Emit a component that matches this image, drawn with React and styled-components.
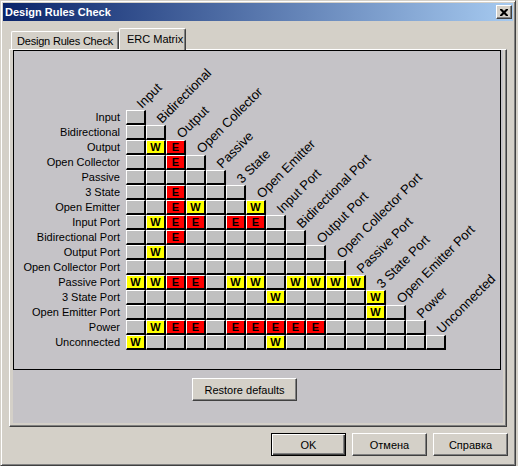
import React from 'react';
import styled, { createGlobalStyle, css } from 'styled-components';

const Global = createGlobalStyle`
  html, body { margin: 0; padding: 0; background: #d4d0c8; }
  body {
    width: 518px; height: 466px; overflow: hidden;
    font-family: "Liberation Sans", Arial, sans-serif;
    font-size: 11px; color: #000;
  }
`;

const Window = styled.div`
  box-sizing: border-box;
  width: 516px;
  height: 466px;
  background: #d4d0c8;
  border: 1px solid;
  border-color: #d4d0c8 #404040 #404040 #d4d0c8;
  box-shadow: inset 1px 1px #fff, inset -1px -1px #808080;
  padding: 2px;
  display: flex;
  flex-direction: column;
`;

const TitleBar = styled.div`
  height: 18px;
  flex: none;
  display: flex;
  align-items: center;
  padding-left: 2px;
  background: linear-gradient(to right, #0a246a, #a6caf0);
  color: #fff;
  font-weight: bold;
  font-size: 11px;
`;

const TitleText = styled.span`
  line-height: 18px;
`;

const CloseButton = styled.div`
  box-sizing: border-box;
  margin-left: auto;
  margin-right: 1px;
  width: 16px;
  height: 14px;
  background: #d4d0c8;
  border: 1px solid;
  border-color: #fff #404040 #404040 #fff;
  box-shadow: inset -1px -1px #808080;
  display: flex;
  align-items: center;
  justify-content: center;
`;

const Body = styled.div`
  flex: 1;
  display: flex;
  flex-direction: column;
  padding: 7px 6px 0 6px;
`;

const TabRow = styled.div`
  display: flex;
  align-items: flex-end;
  height: 21px;
  padding-left: 2px;
  position: relative;
  z-index: 2;
`;

const Tab = styled.div`
  box-sizing: border-box;
  background: #d4d0c8;
  border-top: 1px solid #fff;
  border-left: 1px solid #fff;
  border-right: 1px solid #404040;
  border-radius: 2px 2px 0 0;
  box-shadow: inset -1px 0 #808080;
  white-space: nowrap;
  line-height: 13px;
  ${p => p.$active ? css`
    width: 67px;
    height: 22px;
    margin-bottom: -1px;
    padding: 4px 0 0 7px;
  ` : css`
    width: 108px;
    height: 18px;
    padding: 3px 0 0 5px;
    letter-spacing: -0.2px;
  `}
`;

const Panel = styled.div`
  box-sizing: border-box;
  width: 498px;
  height: 378px;
  border-top: 1px solid #fff;
  border-left: 1px solid #fff;
  border-right: 1px solid #404040;
  border-bottom: 1px solid #404040;
  box-shadow: inset -1px -1px #808080;
  padding: 0 3px 3px 3px;
  position: relative;
  z-index: 1;
`;

const Page = styled.div`
  width: 490px;
  height: 373px;
  background: #c5c3c7;
  display: flex;
  flex-direction: column;
`;

const MatrixBox = styled.div`
  box-sizing: border-box;
  width: 488px;
  height: 320px;
  border: 1px solid #000;
  padding-top: 59px;
  display: flex;
  flex-direction: column;
`;

const Row = styled.div`
  display: flex;
  height: 15px;
`;

const RowLabel = styled.div`
  width: 106px;
  margin-right: 6px;
  text-align: right;
  line-height: 15px;
  white-space: nowrap;
`;

const cellColors = { '.': '#c0c0c0', W: '#ffff00', E: '#ff0000' };

const Cell = styled.div`
  box-sizing: border-box;
  width: 20px;
  height: 15px;
  position: relative;
  border-top: 1px solid #fff;
  border-left: 1px solid #fff;
  border-right: 2px solid #000;
  border-bottom: 2px solid #000;
  background: ${p => cellColors[p.$kind]};
  display: flex;
  align-items: center;
  justify-content: center;
  font-weight: bold;
  font-size: 11px;
  line-height: 12px;
`;

const ColLabel = styled.span`
  position: absolute;
  left: 15px;
  top: -13px;
  font-size: 13px;
  line-height: 13px;
  font-weight: normal;
  white-space: nowrap;
  transform-origin: 0 11px;
  transform: rotate(-45deg);
`;

const Button = styled.button`
  box-sizing: border-box;
  width: ${p => p.$w || 75}px;
  height: 23px;
  padding: 0;
  font-family: "Liberation Sans", Arial, sans-serif;
  font-size: 11px;
  color: #000;
  background: #d4d0c8;
  border: 1px solid;
  border-color: #fff #404040 #404040 #fff;
  box-shadow: inset -1px -1px #808080;
  ${p => p.$default && css`
    border-color: #000;
    box-shadow: inset 1px 1px #fff, inset -1px -1px #404040, inset -2px -2px #808080;
  `}
`;

const RestoreButton = styled(Button)`
  margin-top: 8px;
  margin-left: 179px;
`;

const Footer = styled.div`
  display: flex;
  justify-content: flex-end;
  gap: 6px;
  margin-top: 6px;
  margin-right: -1px;
`;

const names = [
  'Input', 'Bidirectional', 'Output', 'Open Collector', 'Passive', '3 State',
  'Open Emitter', 'Input Port', 'Bidirectional Port', 'Output Port',
  'Open Collector Port', 'Passive Port', '3 State Port', 'Open Emitter Port',
  'Power', 'Unconnected',
];

const matrix = [
  '.',
  '..',
  '.WE',
  '..E.',
  '.....',
  '..E...',
  '..EW..W',
  '.WEE.EE.',
  '..E......',
  '.W........',
  '...........',
  'WWEE.WW.WWWW',
  '.......W....W',
  '............W.',
  '.WEE.EEEEE.....',
  'W......W........',
];

const CloseIcon = () => (
  <svg width="8" height="7" viewBox="0 0 8 7">
    <path d="M0 0h2l2 2l2 -2h2v1l-2.5 2.5l2.5 2.5v1h-2l-2 -2l-2 2h-2v-1l2.5 -2.5l-2.5 -2.5z" fill="#000" />
  </svg>
);

export default function App() {
  return (
    <>
      <Global />
      <Window>
        <TitleBar>
          <TitleText>Design Rules Check</TitleText>
          <CloseButton><CloseIcon /></CloseButton>
        </TitleBar>
        <Body>
          <TabRow>
            <Tab>Design Rules Check</Tab>
            <Tab $active>ERC Matrix</Tab>
          </TabRow>
          <Panel>
            <Page>
              <MatrixBox>
                {matrix.map((row, i) => (
                  <Row key={i}>
                    <RowLabel>{names[i]}</RowLabel>
                    {row.split('').map((k, j) => (
                      <Cell key={j} $kind={k}>
                        {k !== '.' ? k : null}
                        {j === i && <ColLabel>{names[i]}</ColLabel>}
                      </Cell>
                    ))}
                  </Row>
                ))}
              </MatrixBox>
              <RestoreButton $w={105}>Restore defaults</RestoreButton>
            </Page>
          </Panel>
          <Footer>
            <Button $default>OK</Button>
            <Button>Отмена</Button>
            <Button>Справка</Button>
          </Footer>
        </Body>
      </Window>
    </>
  );
}
